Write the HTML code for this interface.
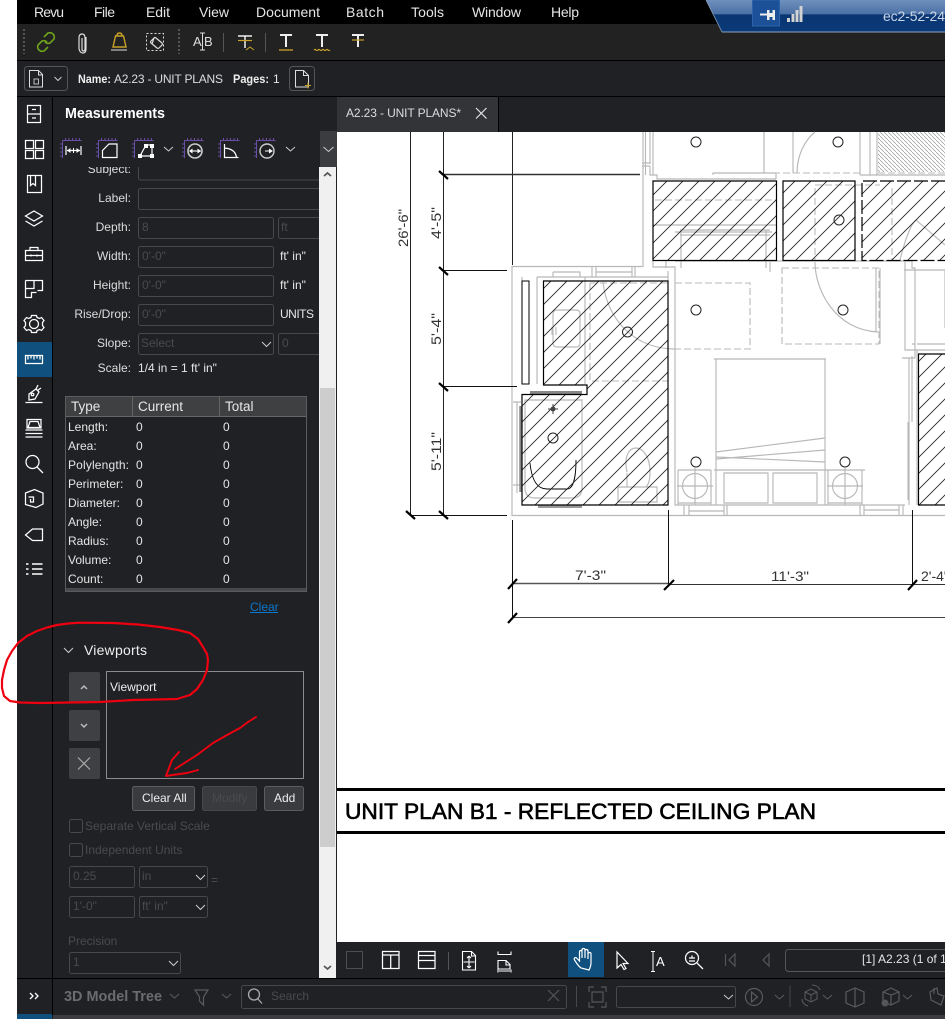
<!DOCTYPE html>
<html><head><meta charset="utf-8"><style>
html,body{margin:0;padding:0;background:#fff;width:945px;height:1019px;overflow:hidden}
svg{display:block}
text{font-family:"Liberation Sans",sans-serif;font-size:12px;fill:#e6e6e6}
.l{text-anchor:end;fill:#ddd}
.t{fill:#ddd}
.d{fill:#4a4b4e}
.w{fill:none;stroke:#fff;stroke-width:1.25}
.c{fill:none;stroke:#ccc;stroke-width:1}
.i{fill:#1f2124;stroke:#47484b;stroke-width:1}
.g{fill:none;stroke:#b8b8b8;stroke-width:1.15}
.g2{fill:none;stroke:#b8b8b8;stroke-width:1.1;stroke-dasharray:7 3}
.k{fill:none;stroke:#000;stroke-width:.9}
.tick{stroke:#000;stroke-width:2.2}
.o{fill:#fff;stroke:#222;stroke-width:1}
.dim{font-size:14px;fill:#333}
.p{fill:none;stroke:#6a4ea5;stroke-width:1}
.dis{fill:none;stroke:#5a5b5e;stroke-width:1.2}
</style></head><body>
<svg width="945" height="1019" viewBox="0 0 945 1019" xmlns="http://www.w3.org/2000/svg">
<defs>
<pattern id="h" patternUnits="userSpaceOnUse" width="16" height="16"><path d="M-2 18L18 -2M-2 2L2 -2M14 18L18 14" stroke="#222" stroke-width=".85" fill="none"/></pattern>
<pattern id="h2" patternUnits="userSpaceOnUse" width="4" height="4"><path d="M0 0L4 4" stroke="#999" stroke-width=".7" fill="none"/></pattern>
<clipPath id="form"><rect x="53" y="167" width="266" height="811"/></clipPath>
<path id="r" class="p" d="M0 140.500H19.500M.5 140V158M3.500 138v2M7 138v2M10.500 138v2M14 138v2M17.500 138v2M-2 144h2M-2 148h2M-2 152h2M-2 156h2"/>
</defs>
<rect x="17" y="0" width="928" height="1019" fill="#1f2124"/>
<!-- menu -->
<rect x="17" y="0" width="928" height="24" fill="#000"/>
<g>
<text x="34" y="17" style="font-size:14px" textLength="30">Revu</text>
<text x="94" y="17" style="font-size:14px" textLength="21">File</text>
<text x="146" y="17" style="font-size:14px" textLength="24">Edit</text>
<text x="199" y="17" style="font-size:14px" textLength="30">View</text>
<text x="256" y="17" style="font-size:14px" textLength="64">Document</text>
<text x="346" y="17" style="font-size:14px" textLength="38">Batch</text>
<text x="411" y="17" style="font-size:14px" textLength="33">Tools</text>
<text x="472" y="17" style="font-size:14px" textLength="49">Window</text>
<text x="551" y="17" style="font-size:14px" textLength="28">Help</text>
</g>
<!-- toolbar -->
<rect x="17" y="24" width="928" height="36" fill="#222"/>
<rect x="17" y="60" width="928" height="1" fill="#000"/>
<rect x="17" y="61" width="928" height="35" fill="#1f2124"/>
<rect x="17" y="96" width="928" height="1" fill="#000"/>
<!-- connection banner -->
<linearGradient id="bl" x1="0" y1="0" x2="0" y2="1"><stop offset="0" stop-color="#6f90bd"/><stop offset=".44" stop-color="#4a70a5"/><stop offset=".46" stop-color="#0a3672"/><stop offset="1" stop-color="#0a3a78"/></linearGradient>
<path d="M706 0H945V32H722Z" fill="url(#bl)"/>
<path d="M722 32H945" stroke="#8ea3bf" stroke-width="1"/>
<path d="M706 0L722 32" stroke="#8ea3bf" stroke-width=".8"/>
<rect x="752.500" y="0" width="27" height="26" fill="#1c5197" stroke="#2a62ab" stroke-width="1"/>
<path d="M760 14.500H768" stroke="#eee" stroke-width="2"/>
<path d="M767 10h2.500v3h3v-3H775V20h-2.500v-3h-3v3H767Z" fill="#eee"/>
<path d="M787 18h3v4h-3ZM791.500 14h3v8h-3ZM795.500 10h3v12h-3ZM799.500 6h3v16h-3Z" fill="#d2d2d2"/>
<text x="883" y="21" style="font-size:14px;fill:#cbd6e6" textLength="62">ec2-52-24</text>
<!-- toolbar icons -->
<path d="M24 29V54M179 29V54" stroke="#555" stroke-width="2" stroke-dasharray="2 2"/>
<g fill="none" stroke="#6fa31c" stroke-width="1.600"><path d="M44 37l4-4q3-1 5 1t1 5l-4 4q-3 1-5-1"/><path d="M48 47l-4 4q-3 1-5-1t-1-5l4-4q3-1 5 1"/></g>
<path d="M86 37v12q0 4-3 4t-4-4V38q0-4 3-4t3 4v11q0 2-1.500 2T82 49V38" fill="none" stroke="#ddd" stroke-width="1.200"/>
<path d="M113 47l2.500-11h8l2.500 11ZM117 36q0-3 2.500-3t2.500 3" fill="none" stroke="#c9a227" stroke-width="1.400"/>
<path d="M111 50H127" stroke="#ddd" stroke-width="1"/>
<rect x="146.500" y="33.500" width="17" height="17" fill="none" stroke="#ddd" stroke-width="1" stroke-dasharray="2 2"/>
<path d="M151 41l3-3q1-1 2 0l6 5q1 1 0 2l-3 3q-1 1-2 0l-6-5q-1-1 0-2ZM154 38l-2 6" fill="none" stroke="#ddd" stroke-width="1.200"/>
<text x="193" y="46" style="font-size:13px;fill:#ddd">A</text><text x="204" y="46" style="font-size:13px;fill:#ddd">B</text>
<path d="M200 33h5M200 50h5M202.500 33V50" stroke="#ddd" stroke-width="1"/>
<path d="M223.500 33V52M265.500 33V52" stroke="#555"/>
<path d="M238 36H252M245 36V48" stroke="#eee" stroke-width="1.500" fill="none"/>
<path d="M238 40.500H252" stroke="#c9a227" stroke-width="1.200"/>
<path d="M246 50l4-3 4 3" stroke="#c9a227" fill="none"/>
<path d="M280 35H292M286 35V47" stroke="#eee" stroke-width="2" fill="none"/><path d="M279 50H293" stroke="#c9a227" stroke-width="1.300"/>
<path d="M316 35H328M322 35V47" stroke="#eee" stroke-width="2" fill="none"/><path d="M314 50q1-1 2 0t2 0 2 0 2 0 2 0 2 0 2 0 2 0" stroke="#c9a227" stroke-width="1.200" fill="none"/>
<path d="M352 35H364M358 35V47" stroke="#eee" stroke-width="2" fill="none"/><path d="M352 40H364" stroke="#c9a227" stroke-width="1.200"/>
<!-- row 2 -->
<rect x="24.500" y="66.500" width="43" height="24" rx="3" fill="none" stroke="#555"/>
<path d="M29.500 70.500h9l4 4V87h-13ZM38.500 70.500V75h4" fill="none" stroke="#ddd" stroke-width="1"/>
<rect x="34" y="79" width="4.500" height="5" fill="none" stroke="#bbb"/>
<path d="M54.500 77l3.500 3.500 3.500-3.500" class="c"/>
<text x="78" y="83" style="font-weight:bold;fill:#eee" textLength="33" lengthAdjust="spacingAndGlyphs">Name:</text>
<text x="114" y="83" textLength="109" style="fill:#ddd">A2.23 - UNIT PLANS</text>
<text x="233" y="83" style="font-weight:bold;fill:#eee" textLength="36" lengthAdjust="spacingAndGlyphs">Pages:</text>
<text x="273" y="83">1</text>
<rect x="289.500" y="66.500" width="25" height="24" rx="3" fill="none" stroke="#555"/>
<path d="M295.500 70.500h8l5 5V87h-13ZM303.500 70.500V75.500h5" fill="none" stroke="#ddd" stroke-width="1"/>
<path d="M305 85.500h6M308 82.500v6" stroke="#c9a227" stroke-width="1"/>
<!-- sidebar -->
<rect x="52" y="97" width="1" height="881" fill="#000"/>
<rect x="17" y="342" width="35" height="35" fill="#10507f"/>
<g>
<path class="w" d="M27.500 105.500h13v17h-13ZM27.500 114h13M32 109.500h4M32 118h4"/>
<path class="w" d="M25.500 140.500h8v8h-8ZM35.500 140.500h8v8h-8ZM25.500 150.500h8v8h-8ZM35.500 150.500h8v8h-8Z"/>
<path class="w" d="M27.500 175.500h14v17h-14ZM30.500 175.500v10l2.500-2 2.500 2v-10"/>
<path class="w" d="M34 211l8.500 5-8.500 5-8.500-5ZM25.500 221l8.500 5 8.500-5"/>
<path class="w" d="M25.500 250.500h17v10h-17ZM30 250.500v-3h8v3M25.500 255.500h17M31 254.500v2M37 254.500v2"/>
<path class="w" d="M25.500 280.500h17v10h-5M34 280.500v8h-8M25.500 280.500v17h6v-5h5"/>
<circle cx="34" cy="324" r="4.500" class="w"/>
<path class="w" d="M31.500 315.500h5l.5 2 2.500 1 2-1 2.500 3-1.500 2v3l1.500 2-2.500 3-2-1-2.500 1-.5 2h-5l-.5-2-2.500-1-2 1-2.500-3 1.500-2v-3l-1.500-2 2.500-3 2 1 2.500-1Z"/>
<path class="w" d="M25.500 355.500h17v8h-17ZM28 355.500v4M31 355.500v3M34 355.500v4M37 355.500v3M40 355.500v4"/>
<path class="w" d="M25.500 402.500h17M29 394l7-5 3 3-4 7-6 1ZM36 389l2-4M38 390l3-2"/>
<circle cx="32.500" cy="394.500" r="1.300" class="w"/>
<path class="w" d="M25.500 430h17M25.500 433.500h17M25.500 437h17M27 428v-8.500h14V428ZM30 421.500h8l2 6H28Z"/>
<circle cx="32.500" cy="462" r="6.500" class="w"/><path class="w" d="M37 467l6 6"/>
<path class="w" d="M25.500 493l9-3.500 8.500 3.500v11l-7 3.500-10.500-3Zm3 4h5v5h-3v-3"/>
<path class="w" d="M42.500 529v11.500h-10L25.500 535l7-6Z"/>
<path class="w" style="stroke-width:1.600" d="M32 564h10.500M32 569h10.500M32 574h10.500M26 564h2.500M26 569h2.500M26 574h2.500"/>
</g>
<!-- measurements -->
<text x="65" y="118" style="font-size:14.500px;font-weight:bold;fill:#fff" textLength="100" lengthAdjust="spacingAndGlyphs">Measurements</text>
<g>
<use href="#r" x="62"/>
<path class="w" d="M66 146v9M81 146v9M67 150.500h13" style="stroke-width:1.200"/><path d="M67 150.500l3.500-2.500v5ZM80 150.500l-3.500-2.500v5Z" fill="#fff"/><path d="M73.500 148v5" stroke="#fff"/>
<use href="#r" x="98"/>
<path class="w" d="M102.500 157.500v-7l6.500-6.500h8V157.500Z" style="stroke-width:1.200"/>
<use href="#r" x="134"/>
<path class="w" d="M140 156l6-11h6v11Z" style="stroke-width:1.200"/>
<path d="M138 154h4v4h-4ZM150 144h4v4h-4ZM144 144h4v4h-4ZM150 154h4v4h-4Z" fill="#fff"/>
<path d="M164 147l4.500 4 4.500-4" class="c"/>
<use href="#r" x="184"/>
<circle cx="195" cy="151" r="7" fill="none" stroke="#ccc" stroke-width="1.600"/><path class="w" d="M190 151h11" style="stroke-width:1.100"/><path d="M189 151l3.500-2.500v5ZM201 151l-3.500-2.500v5Z" fill="#fff"/>
<use href="#r" x="220"/>
<path class="w" d="M224.500 144v13.500h14M224.500 148q11 1 12 9.500" style="stroke-width:1.200"/>
<use href="#r" x="256"/>
<circle cx="267" cy="151" r="7" fill="none" stroke="#ccc" stroke-width="1.400"/><path d="M265 151h5" stroke="#fff"/><path d="M273 151l-4-2.500v5Z" fill="#fff"/>
<path d="M286 147l4.500 4 4.500-4" class="c"/>
</g>
<rect x="320" y="131" width="17" height="36" fill="#3b3c3f"/>
<path d="M323.500 147l5 4.500 5-4.500" class="c"/>
<!-- scrollbar -->
<rect x="319" y="167" width="17" height="811" fill="#f0f0f0"/>
<rect x="320" y="388" width="15" height="459" fill="#cdcdcd"/>
<path d="M324 176l3.500-3 3.500 3M324 966l3.500 3 3.500-3" fill="none" stroke="#555" stroke-width="1.800"/>
<!-- form -->
<g clip-path="url(#form)">
<text class="l" x="131" y="173">Subject:</text>
<rect class="i" x="138.500" y="158" width="190" height="22" rx="2"/>
<text class="l" x="131" y="202">Label:</text>
<rect class="i" x="138.500" y="188.500" width="190" height="21" rx="2"/>
<text class="l" x="131" y="231">Depth:</text>
<rect class="i" x="138.500" y="217.500" width="135" height="21" rx="2"/><text class="d" x="142" y="231">8</text>
<rect class="i" x="278.500" y="217.500" width="60" height="21" rx="2"/><text class="d" x="281" y="231">ft</text>
<text class="l" x="131" y="260">Width:</text>
<rect class="i" x="138.500" y="246.500" width="135" height="21" rx="2"/><text class="d" x="142" y="260">0'-0"</text><text x="280" y="260">ft' in"</text>
<text class="l" x="131" y="289">Height:</text>
<rect class="i" x="138.500" y="275.500" width="135" height="21" rx="2"/><text class="d" x="142" y="289">0'-0"</text><text x="280" y="289">ft' in"</text>
<text class="l" x="131" y="318">Rise/Drop:</text>
<rect class="i" x="138.500" y="304.500" width="135" height="21" rx="2"/><text class="d" x="142" y="318">0'-0"</text><text x="280" y="318" textLength="34">UNITS</text>
<text class="l" x="131" y="347">Slope:</text>
<rect class="i" x="138.500" y="333.500" width="135" height="21" rx="2"/><text class="d" x="141" y="347">Select</text><path d="M262 342l4.500 4.500 4.500-4.500" class="c"/>
<rect class="i" x="278.500" y="333.500" width="60" height="21" rx="2"/><text class="d" x="282" y="347">0</text>
<text class="l" x="131" y="372">Scale:</text><text x="138" y="372">1/4 in = 1 ft' in"</text>
<!-- table -->
<rect x="65.500" y="396.500" width="241" height="195" fill="#1f2124" stroke="#5b5c5e"/>
<rect x="66" y="397" width="240" height="19" fill="#3f4042"/>
<path d="M132.500 397V416M219.500 397V416M66 416.500H306" stroke="#666"/>
<rect x="66" y="588" width="240" height="3" fill="#48494b"/>
<g><text x="71" y="411" style="font-size:13.500px">Type</text><text x="138" y="411" style="font-size:13.500px">Current</text><text x="225" y="411" style="font-size:13.500px">Total</text></g>
<text x="68" y="431">Length:</text><text x="136" y="431">0</text><text x="223" y="431">0</text>
<text x="68" y="450">Area:</text><text x="136" y="450">0</text><text x="223" y="450">0</text>
<text x="68" y="469" textLength="61">Polylength:</text><text x="136" y="469">0</text><text x="223" y="469">0</text>
<text x="68" y="488">Perimeter:</text><text x="136" y="488">0</text><text x="223" y="488">0</text>
<text x="68" y="507">Diameter:</text><text x="136" y="507">0</text><text x="223" y="507">0</text>
<text x="68" y="526">Angle:</text><text x="136" y="526">0</text><text x="223" y="526">0</text>
<text x="68" y="545">Radius:</text><text x="136" y="545">0</text><text x="223" y="545">0</text>
<text x="68" y="564">Volume:</text><text x="136" y="564">0</text><text x="223" y="564">0</text>
<text x="68" y="583">Count:</text><text x="136" y="583">0</text><text x="223" y="583">0</text>
<text x="250" y="611" style="fill:#0b78cf">Clear</text><path d="M250 612.500H278" stroke="#0b78cf"/>
<!-- viewports -->
<path d="M64 648l4.500 4.500 4.500-4.500" class="c"/>
<text x="84" y="655" style="font-size:14px;fill:#eee" textLength="63">Viewports</text>
<rect x="69" y="672" width="31" height="31" rx="2" fill="#3f4043"/><path d="M81 689l3-3 3 3" fill="none" stroke="#bbb" stroke-width="1.500"/>
<rect x="69" y="710" width="31" height="31" rx="2" fill="#3f4043"/><path d="M81 724l3 3 3-3" fill="none" stroke="#bbb" stroke-width="1.500"/>
<rect x="69" y="748" width="31" height="31" rx="2" fill="#3f4043"/><path d="M78 757.500l12 12M90 757.500l-12 12" stroke="#aaa" stroke-width="1.200"/>
<rect x="106.500" y="671.500" width="197" height="107" fill="#1f2124" stroke="#8a8b8d"/>
<text x="110" y="691" style="fill:#eee">Viewport</text>
<rect x="132.500" y="786.500" width="62" height="24" rx="2" fill="#3a3b3e" stroke="#5c5d60"/><text x="142" y="802" style="fill:#eee">Clear All</text>
<rect x="202.500" y="786.500" width="54" height="24" rx="2" fill="#3a3b3e" stroke="#47484b"/><text x="212" y="802" class="d">Modify</text>
<rect x="264.500" y="786.500" width="39" height="24" rx="2" fill="#3a3b3e" stroke="#5c5d60"/><text x="274" y="802" style="fill:#eee">Add</text>
<rect x="69.500" y="819.500" width="13" height="13" rx="2" fill="none" stroke="#47484b"/><text x="85" y="830" class="d">Separate Vertical Scale</text>
<rect x="69.500" y="843.500" width="13" height="13" rx="2" fill="none" stroke="#47484b"/><text x="85" y="854" class="d">Independent Units</text>
<rect class="i" x="69.500" y="866.500" width="65" height="21" rx="2"/><text class="d" x="73" y="880">0.25</text>
<rect class="i" x="139.500" y="866.500" width="68" height="21" rx="2"/><text class="d" x="142" y="880">in</text><path d="M196 875l4.500 4.500 4.500-4.500" class="c"/>
<text class="d" x="211" y="884">=</text>
<rect class="i" x="69.500" y="896.500" width="65" height="21" rx="2"/><text class="d" x="73" y="910">1'-0"</text>
<rect class="i" x="139.500" y="896.500" width="68" height="21" rx="2"/><text class="d" x="142" y="910">ft' in"</text><path d="M196 905l4.500 4.500 4.500-4.500" class="c"/>
<text class="d" x="68" y="945">Precision</text>
<rect class="i" x="69.500" y="952.500" width="111" height="21" rx="2"/><text class="d" x="73" y="966">1</text><path d="M169 961l4.500 4.500 4.500-4.500" class="c"/>
</g>
<!-- tab -->
<rect x="337" y="97" width="161" height="35" fill="#333437"/>
<rect x="498" y="97" width="1" height="35" fill="#000"/>
<text x="346" y="117" style="fill:#ddd" textLength="115">A2.23 - UNIT PLANS*</text>
<path d="M476 108l10.500 10.500M486.500 108L476 118.500" stroke="#e6e6e6" stroke-width="1.200"/>
<!-- document -->
<rect x="337" y="132" width="608" height="810" fill="#fff"/>
<g>
<!-- gray walls -->
<path class="g" d="M512 266.500H643V132M645.500 132V175M650 132V164M642 163H650M642 166H650M650 166V175H657V179H776M713 175V173H776M776 173V179M653 132V175"/>
<path class="g" d="M512 266V515.500H945M537 277H668M592 267V277M596 267V277M632 267V277M635 267V277M596 272H632M553 272V277H580V272H553M537 277V384M522 277V384M517 402V493M513 402H521M513 485H521"/>
<path class="g" d="M653 261V267H675V505H905M668 271V281M675 261H912V268H915V344H912M666 261V268"/>
<path class="g" d="M917 344H945M915 344V358H909V505M912 356V422M908 422V500M917 350V505M902 358H909"/>
<path class="g" d="M684 505V515M689 505V515M724 505V515M727 505V515M689 511H724M860 505V515M864 505V515M899 505V515M903 505V515M864 510H899"/>
<path class="g" d="M793 132V173M860 132V175M870 132V175M877 132V175M860 175H945M764 132V173"/>
<path class="g2" d="M764 132V173H860M878 173H945M675 283H750V349H675M782 268H879V344H782Z"/>
<path class="g" d="M797 173C797 155 805 140 815 132M815 262C815 290 835 330 878 332M675 349C635 349 607 320 603 282M900 260C905 240 910 225 916 220L945 245"/>
<path class="g" d="M876 268V332M880 268V344M905 262V350H945M904 270H945V328M585 277V384"/>
<path class="g2" d="M590 283V381H668M590 283H668M815 188V260M892 188V260M815 185H880M655 200H776"/>
<path class="g" d="M653 225H776M681 230V268M766 230V268M680 235H770M680 230H770M675 232H772M770 262V272"/>
<!-- bed -->
<path class="g" d="M716 359V505M825 359V505M714 359H826M716 452L825 438M716 459L825 450M716 457L825 462M714 470H865M724 473V503H768V473ZM773 473V503H817V473ZM678 470V505M711 470V505M678 470H711M678 503H711M828 470V505M862 470V505M828 503H862"/>
<circle cx="695" cy="486" r="12.500" class="g"/><circle cx="845" cy="486" r="12.500" class="g"/>
<path class="g" d="M695 468V505M677 486H713M845 468V505M827 486H863"/>
<!-- bath fixtures -->
<path class="g" d="M557 310h19q4 0 4 4v29q0 4-4 4h-19q-4 0-4-4v-29q0-4 4-4ZM552 327v8M556 327v8"/>
<path class="g" d="M525 400H582V488Q582 498 572 498H535Q525 498 525 488Z"/>
<path class="k" d="M530 463C532 482 538 489 547 489H567C573 489 576 478 576 460"/>
<path class="g" d="M627 472C620 440 650 440 650 472C650 480 648 485 646 487M618 487H657V502H618ZM627 473V487"/>
<path d="M530 392.500H582" stroke="#888" stroke-width="3"/><path d="M520.500 406V492" stroke="#888" stroke-width="2.500"/><path d="M538 506.500H582" stroke="#999" stroke-width="3"/>
<!-- hatch -->
<path d="M543.500 281H668V505H522V394.500H587V385H543.500Z" fill="url(#h)" stroke="#000" stroke-width="1.200"/>
<path d="M653 181H776.500V260.500H653Z" fill="url(#h)" stroke="#000" stroke-width="1.200"/>
<path d="M783 181H855V260.500H783Z" fill="url(#h)" stroke="#000" stroke-width="1.200"/>
<path d="M862 181H945V260.500H862Z" fill="url(#h)"/>
<path d="M945 181H862V260.500H945" fill="none" stroke="#000" stroke-width="1.200" stroke-dasharray="14 3"/>
<path d="M945 354H918.500V505H945" fill="url(#h)" stroke="#000" stroke-width="1.200"/>
<rect x="878" y="132" width="67" height="40" fill="url(#h2)"/>
<rect x="522" y="281" width="7" height="103" fill="#fff" stroke="#000" stroke-width="1"/>
<!-- dims -->
<path d="M410.500 132V516M443.500 132V516M512.500 132V265" fill="none" stroke="#222" stroke-width="1"/>
<path d="M443 174.500H640" stroke="#333" stroke-width="1.500"/>
<path d="M443 270.500H507M443 386.500H517M410 515.500H507" stroke="#111" stroke-width="1"/>
<path class="tick" d="M439 171L448 179M439 267L448 275M439 383L448 391M439 511L448 519M406 511L415 519"/>
<path d="M512.500 520V618M668.500 510V585M912.500 510V585" stroke="#111" stroke-width="1"/>
<path d="M512 583.500H668" stroke="#555" stroke-width="1.400"/><path d="M668 584.500H945" stroke="#333" stroke-width="1"/><path d="M512 617.500H945" stroke="#444" stroke-width="1"/>
<path class="tick" d="M508 589L517 579M664 590L674 580M908 590L917 580M508 623L517 613"/>
<text class="dim" transform="translate(408,247) rotate(-90)" textLength="38" lengthAdjust="spacingAndGlyphs">26'-6"</text>
<text class="dim" transform="translate(441,239) rotate(-90)" textLength="32" lengthAdjust="spacingAndGlyphs">4'-5"</text>
<text class="dim" transform="translate(441,345) rotate(-90)" textLength="32" lengthAdjust="spacingAndGlyphs">5'-4"</text>
<text class="dim" transform="translate(441,471) rotate(-90)" textLength="39" lengthAdjust="spacingAndGlyphs">5'-11"</text>
<text class="dim" x="575" y="580" textLength="31" lengthAdjust="spacingAndGlyphs">7'-3"</text>
<text class="dim" x="771" y="581" textLength="38" lengthAdjust="spacingAndGlyphs">11'-3"</text>
<text class="dim" x="921" y="581">2'-4"</text>
<!-- circles -->
<circle class="o" cx="696" cy="142" r="5"/><circle class="o" cx="838" cy="142" r="5"/>
<circle class="o" cx="696" cy="310" r="5"/><circle class="o" cx="843" cy="310" r="5"/>
<circle class="o" cx="696" cy="462" r="5"/><circle class="o" cx="845" cy="462" r="5"/>
<circle cx="839" cy="220" r="5" fill="none" stroke="#222"/><circle cx="627.500" cy="332" r="5" fill="none" stroke="#222"/><circle cx="553" cy="438" r="5" fill="none" stroke="#222"/>
<circle cx="553" cy="409" r="2.500" fill="#444"/><path d="M553 404V414M548 409H558" stroke="#444"/>
<!-- title -->
<rect x="337" y="788" width="608" height="3" fill="#000"/>
<rect x="337" y="831" width="608" height="3" fill="#000"/>
<text x="345" y="819" style="font-size:22px;fill:#000;stroke:#000;stroke-width:.6" textLength="471" lengthAdjust="spacingAndGlyphs">UNIT PLAN B1 - REFLECTED CEILING PLAN</text>
</g>
<!-- bottom view toolbar -->
<rect x="337" y="942" width="608" height="36" fill="#1f2124"/>
<rect x="17" y="978" width="928" height="1" fill="#000"/>
<rect x="346.500" y="951.500" width="16" height="17" fill="none" stroke="#4d4e51"/>
<path d="M382.500 951.500h16.500v17h-16.500ZM382.500 955h16.500M390.700 955v13.500" class="w"/>
<path d="M418.500 951.500h16.500v17h-16.500ZM418.500 955.500h16.500M418.500 960.500h16.500" class="w"/>
<path d="M448.500 952V970" stroke="#555"/>
<path d="M462.500 951.500h9l4 4v14.500h-13ZM471.500 951.500V956h4M469 956v12M463.500 962h11M469 956l-2 2M469 956l2 2M469 968l-2-2M469 968l2-2" fill="none" stroke="#fff" stroke-width="1.100"/>
<path d="M498 951.500v3h13v-3M498 960.500h8l4 4v4.500h-12ZM498 969.500v3M511 969.500v3M499 971h11M506 960.500V965h4" fill="none" stroke="#fff" stroke-width="1.100"/>
<rect x="568" y="942" width="36" height="35" fill="#10507f"/>
<path d="M581 968c-3-2-5-6-6.500-8-1-2 1-3 2-2l3 3v-9c0-2 2.500-2 2.500 0v6-8c0-2 3-2 3 0v8-7c0-2 3-2 3 0v8-5c0-2 3-2 3 0v9c0 3-1 5-2 7Z" fill="none" stroke="#fff" stroke-width="1.200"/>
<path d="M617 952v16l4-3.500 3 5 2-1-3-5h5Z" fill="none" stroke="#fff" stroke-width="1.200"/>
<path d="M651 951.500h4M651 971.500h4M653 951.500v20" stroke="#fff"/><text x="656" y="966" style="font-size:13px;fill:#fff">A</text>
<circle cx="692" cy="958" r="6.500" class="w"/><path class="w" d="M697 963l6 6M689 958h6M692 955.500v2M689 961h6"/>
<path d="M725.500 954v12M735 954l-6 6 6 6ZM769 954l-6 6 6 6Z" fill="none" stroke="#55565a" stroke-width="1.200"/>
<rect x="785.500" y="949.500" width="170" height="22" rx="3" fill="none" stroke="#55565a"/>
<text x="862" y="963">[1] A2.23 (1 of 1)</text>
<!-- bottom bar -->
<rect x="17" y="979" width="928" height="36" fill="#1f2124"/>
<path d="M52.500 979V1015" stroke="#000"/>
<rect x="53" y="1015" width="892" height="4" fill="#3b3c3f"/>
<rect x="17" y="1014" width="35" height="5" fill="#10507f"/>
<path d="M30 993l3 3-3 3M35 993l3 3-3 3" fill="none" stroke="#fff" stroke-width="1.300"/>
<text x="64" y="1001" style="font-size:14.500px;font-weight:bold;fill:#6b6c6f" textLength="98" lengthAdjust="spacingAndGlyphs">3D Model Tree</text>
<path d="M170 994l4.500 4 4.500-4M222 994l4.500 4 4.500-4" fill="none" stroke="#5a5b5e"/>
<path d="M195 990H208L203.500 997V1005L199.500 1001V997Z" class="dis"/>
<rect x="241.500" y="985.500" width="325" height="23" rx="2" fill="none" stroke="#47484b"/>
<circle cx="254" cy="994.500" r="5.500" fill="none" stroke="#aaa" stroke-width="1.300"/><path d="M258 999l4 4.500" stroke="#aaa" stroke-width="1.300"/>
<text x="271" y="1000" class="d">Search</text>
<path d="M548 990l11 11M559 990l-11 11" stroke="#555" stroke-width="1.200"/>
<path d="M576.500 986V1007" stroke="#47484b"/>
<path d="M589 992v-5h5M601 987h5v5M606 1002v5h-5M594 1007h-5v-5M592 992h11v10h-11Z" fill="none" stroke="#55565a" stroke-width="1.200"/>
<rect x="616.500" y="986.500" width="119" height="21" rx="2" fill="none" stroke="#47484b"/>
<path d="M724 995l4.500 4 4.500-4" class="c"/>
<circle cx="754" cy="997" r="8.500" class="dis"/><path d="M751.500 992l6 5-6 5Z" class="dis"/>
<path d="M775 995l4.500 4 4.500-4M823 995l4.500 4 4.500-4M903 995l4.500 4 4.500-4" fill="none" stroke="#5a5b5e"/>
<path d="M790 986V1007" stroke="#47484b"/>
<path d="M805 992l6-3 6 3v7l-6 3-6-3ZM805 992l6 3 6-3M811 995v7M812 985c4 0 7 2 8 5M802 999c0 4 3 6 6 7" fill="none" stroke="#5a5b5e"/>
<path d="M846 992l9-4 9 4v11l-9 4-9-4ZM855 988v19" class="dis"/>
<path d="M883 992l8-4 8 4v9l-8 4-8-3ZM883 992l8 3 8-3M891 995v10" class="dis"/><circle cx="885" cy="1003" r="3.500" fill="#55565a"/>
<path d="M930 992l5-3 2-1 1 6 6 2-3 9-10-5ZM934 988V994" class="dis"/>
<!-- red annotation -->
<path d="M80 622.700L113 623L138 624.500L160 627L178 630L190 633L198 639L203 647L207 654L208 660L207 670L203 680L197 689L190 695L177 699L155 699.500L133 700L100 702L70 702.500L40 703L20 702.500L10 701L4 696L2 688L2 680L4 670L7 660L12 651L18 643L27 636L37 631L47 627.500L57 625L68 623.500Z" fill="none" stroke="#ee0010" stroke-width="2.200" stroke-linejoin="round"/>
<path d="M256 717L248 722L240 728L227 735L213 743L197 755L175 769M179 752L172 760L169 768L166 776L176 774.500L187 773L198 770" fill="none" stroke="#ee0010" stroke-width="1.900" stroke-linejoin="round" stroke-linecap="round"/>
</svg>
</body></html>
